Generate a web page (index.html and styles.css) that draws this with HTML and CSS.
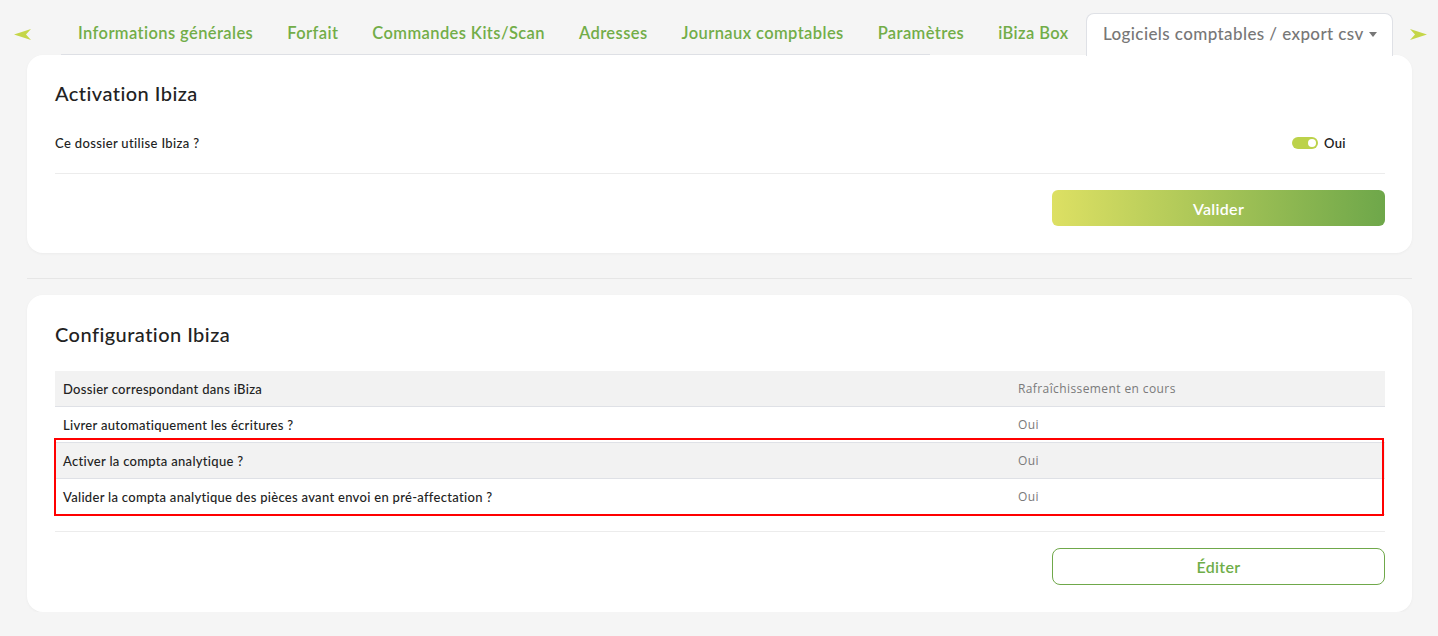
FILE: index.html
```html
<!DOCTYPE html>
<html lang="fr">
<head>
    <meta charset="UTF-8">
    <meta name="viewport" content="width=device-width, initial-scale=1.0">
    <title>Logiciels comptables</title>
    <link rel="stylesheet" href="styles.css">
</head>
<body>
    <nav class="tabs">
        <span class="arrow">
            <svg width="17" height="11" viewBox="0 0 17 11"><polygon points="0,5.5 17,0 12,5.5 17,11" fill="#c5d648"/></svg>
        </span>
        <ul class="tab-list">
            <li class="tab">Informations générales</li>
            <li class="tab">Forfait</li>
            <li class="tab">Commandes Kits/Scan</li>
            <li class="tab">Adresses</li>
            <li class="tab">Journaux comptables</li>
            <li class="tab">Paramètres</li>
            <li class="tab">iBiza Box</li>
            <li class="tab active">Logiciels comptables / export csv <span class="caret"></span></li>
        </ul>
        <span class="arrow right">
            <svg width="17" height="11" viewBox="0 0 17 11"><polygon points="17,5.5 0,0 5,5.5 0,11" fill="#c5d648"/></svg>
        </span>
    </nav>

    <section class="card first">
        <h3>Activation Ibiza</h3>
        <div class="field">
            <span class="label">Ce dossier utilise Ibiza ?</span>
            <span class="switch"><span class="knob"></span></span>
            <span class="switch-text">Oui</span>
        </div>
        <hr>
        <div class="actions">
            <button class="btn-primary">Valider</button>
        </div>
    </section>

    <hr class="sep">

    <section class="card second">
        <h3 class="config-title">Configuration Ibiza</h3>
        <div class="table">
            <div class="row odd"><span>Dossier correspondant dans iBiza</span><span class="val">Rafraîchissement en cours</span></div>
            <div class="row"><span>Livrer automatiquement les écritures ?</span><span class="val">Oui</span></div>
            <div class="row odd"><span>Activer la compta analytique ?</span><span class="val">Oui</span></div>
            <div class="row"><span>Valider la compta analytique des pièces avant envoi en pré-affectation ?</span><span class="val">Oui</span></div>
            <div class="highlight"></div>
        </div>
        <hr>
        <div class="actions">
            <button class="btn-outline">Éditer</button>
        </div>
    </section>
</body>
</html>
```
FILE: styles.css
```css
body { margin: 0; background: #f5f5f5; font-family: "Lato", "Open Sans", sans-serif; color: #222; padding: 13px 26px 0 27px; }

.tabs { display: flex; align-items: center; height: 42px; margin-left: -27px; margin-right: -26px; background: linear-gradient(#dfe1e6, #dfe1e6) no-repeat 61px 100% / 869px 1px; }
.arrow { width: 60px; flex-shrink: 0; padding-left: 14px; box-sizing: border-box; display: flex; align-items: center; }
.arrow.right { width: 45px; padding-left: 17px; }
.tab-list { display: flex; list-style: none; margin: 0; padding: 0; height: 42px; flex: 1; min-width: 0; }
.tab { flex-shrink: 0; white-space: nowrap; padding: 0 17px; line-height: 40px; font-size: 16.5px; font-weight: 600; letter-spacing: 0.4px; color: #72ad48; }
.tab:first-child { padding-left: 18px; }
.tab.active { margin-left: auto; background: #fff; color: #777; font-weight: 500; font-size: 17px; letter-spacing: 0.4px; border: 1px solid #dfe1e6; border-bottom: none; border-radius: 8px 8px 0 0; padding: 0 15px 0 16px; height: 42px; }
.caret { display: inline-block; border-left: 4px solid transparent; border-right: 4px solid transparent; border-top: 5px solid #777; vertical-align: 3px; margin-left: 1px; }

.card { background: #fff; border-radius: 16px; padding: 24px 27px 27px 28px; box-shadow: 0 1px 3px rgba(0,0,0,0.04); }
h3 { margin: 0; font-size: 20px; font-weight: 500; color: #222; line-height: 28px; letter-spacing: 0.45px; }
.config-title { margin-top: 1px; }

.field { display: flex; align-items: center; margin-top: 26px; height: 20px; font-size: 13px; font-weight: 500; letter-spacing: 0.35px; }
.field .label { flex: 1; }
.switch { width: 26px; height: 12px; border-radius: 6px; background: #bcd24a; position: relative; margin-right: 6px; }
.knob { position: absolute; right: 2px; top: 2px; width: 8px; height: 8px; border-radius: 50%; background: #fff; }
.switch-text { width: 61px; font-size: 13px; font-weight: 600; }

hr { border: none; border-top: 1px solid #ececec; margin: 20px 0 16px; }
.second hr { margin-top: 16px; }
.sep { margin: 25px 0 16px; border-top-color: #e6e6e6; }

.actions { display: flex; justify-content: flex-end; }
.btn-primary, .btn-outline { width: 333px; height: 36px; border-radius: 6px; font-family: inherit; font-size: 16px; font-weight: 600; letter-spacing: 0.3px; cursor: pointer; }
.btn-primary { border: none; color: #fff; background: linear-gradient(90deg, #dde063, #6ea74a); }
.btn-outline { height: 37px; border: 1px solid #6fa84a; background: #fff; color: #6fae48; border-radius: 8px; }

.table { position: relative; margin-top: 23px; font-size: 13px; font-weight: 500; letter-spacing: 0.3px; }
.row { display: grid; grid-template-columns: 955px 1fr; height: 35px; align-items: center; padding-left: 8px; border-bottom: 1px solid #dfe1e6; }
.row.odd { background: #f2f2f2; }
.val { font-family: "Open Sans", sans-serif; font-weight: 400; font-size: 12px; letter-spacing: 0.4px; color: #7a7a7a; }
.highlight { position: absolute; left: -1px; right: 1px; top: 67px; height: 78px; box-sizing: border-box; border: 2px solid #f00; }
```
